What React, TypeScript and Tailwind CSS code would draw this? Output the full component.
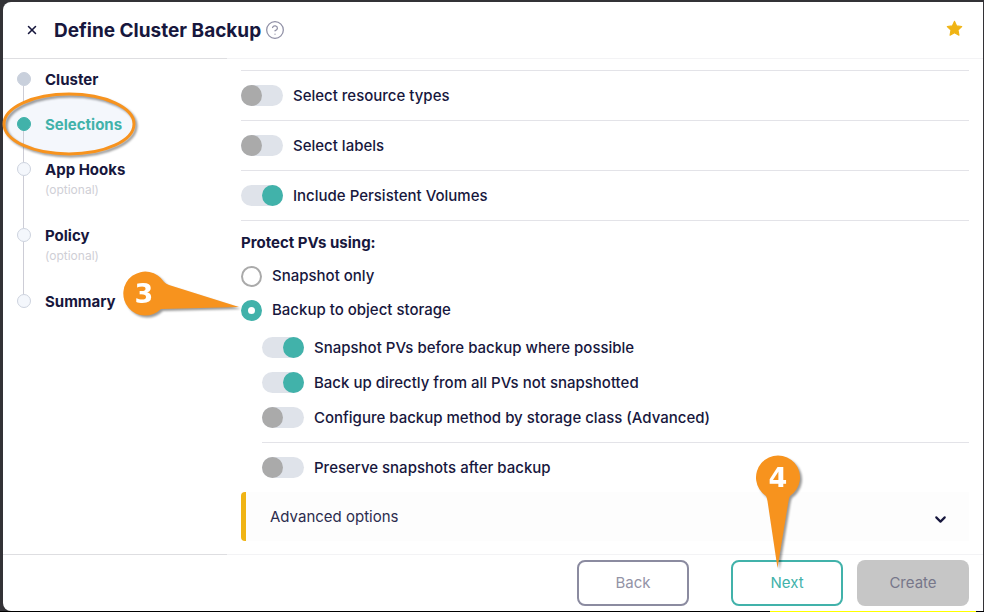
import { useState } from 'react'
import { ChevronDown, CircleHelp, X } from 'lucide-react'
import clsx from 'clsx'

type StepState = 'done' | 'current' | 'todo'

const steps: { label: string; state: StepState; optional?: boolean }[] = [
  { label: 'Cluster', state: 'done' },
  { label: 'Selections', state: 'current' },
  { label: 'App Hooks', state: 'todo', optional: true },
  { label: 'Policy', state: 'todo', optional: true },
  { label: 'Summary', state: 'todo' },
]

function Toggle({ id, label, defaultChecked }: { id: string; label: string; defaultChecked?: boolean }) {
  return (
    <div className="flex flex-1 items-center gap-2.5">
      <input
        id={id}
        type="checkbox"
        role="switch"
        defaultChecked={defaultChecked}
        className="flex h-[21px] w-[42px] shrink-0 appearance-none rounded-full bg-[#dfe3ea] before:size-[21px] before:rounded-full before:bg-[#aaaaaa] checked:before:ml-[21px] checked:before:bg-[#41b2aa]"
      />
      <label htmlFor={id} className="pt-px">{label}</label>
    </div>
  )
}

function StepItem({ label, state, optional, last }: { label: string; state: StepState; optional?: boolean; last: boolean }) {
  return (
    <li className={clsx('relative flex gap-3.5', optional ? 'h-[66px]' : 'h-[45px]')}>
      {state === 'current' && (
        <svg className="absolute -top-[26px] -left-[15px] h-[70px] w-[140px]" viewBox="0 0 140 70">
          <ellipse cx="67" cy="33" rx="65" ry="30" fill="#f4f7fc" />
        </svg>
      )}
      <div className="relative flex w-3.5 flex-col items-center">
        <span
          className={clsx(
            'size-3.5 shrink-0 rounded-full border',
            state === 'done' && 'border-[#c9d0dc] bg-[#c9d0dc]',
            state === 'current' && 'border-[#41b2aa] bg-[#41b2aa]',
            state === 'todo' && 'border-[#cdd3de] bg-[#f4f7fc]'
          )}
        />
        {!last && <span className="mr-px w-px flex-1 bg-[#cdcdd6]" />}
      </div>
      <div className="relative">
        <p className={clsx('text-[15px] leading-4 font-bold', state === 'current' && 'text-[#41b2aa]')}>{label}</p>
        {optional && <p className="mt-1.5 text-xs leading-3 text-[#cfcfd6]">(optional)</p>}
      </div>
      {state === 'current' && (
        <svg
          className="pointer-events-none absolute -top-[26px] -left-[15px] h-[70px] w-[140px] drop-shadow-[2px_2px_1px_rgba(0,0,0,0.4)]"
          viewBox="0 0 140 70"
          fill="none"
        >
          <ellipse cx="67" cy="33" rx="65" ry="30" stroke="#f7931e" strokeWidth="3" />
        </svg>
      )}
    </li>
  )
}

export default function App() {
  const [method, setMethod] = useState('backup')

  return (
    <div className="flex min-h-screen flex-col bg-[#333236] pt-0.5 font-['Inter','Liberation_Sans',sans-serif] text-[15px] text-[#17173d]">
      <div className="mr-px ml-[3px] flex flex-1 flex-col rounded-l-lg bg-white">
        <header className="flex h-14 items-center pr-5 pl-[22px]">
          <button aria-label="Close">
            <X size={14} strokeWidth={2.6} />
          </button>
          <h1 className="ml-[15px] pt-0.5 text-[19px] font-bold">Define Cluster Backup</h1>
          <button aria-label="Help" className="ml-1 text-[#8f8fa5]">
            <CircleHelp size={20} strokeWidth={1.5} />
          </button>
          <button aria-label="Favorite" className="mb-1 ml-auto">
            <svg width="17" height="17" viewBox="0 0 24 24" fill="#f0b414" stroke="#f0b414" strokeWidth="1.5" strokeLinejoin="round">
              <path d="M12 1.8l3.1 6.5 7.1 1-5.2 5 1.3 7.1L12 18l-6.3 3.4L7 14.3l-5.2-5 7.1-1z" />
            </svg>
          </button>
        </header>

        <div className="flex flex-1">
          <nav className="w-[224px] shrink-0 border-y border-[#dedee1] pt-[13px] pl-3.5">
            <ol>
              {steps.map((step, i) => (
                <StepItem key={step.label} {...step} last={i === steps.length - 1} />
              ))}
            </ol>
          </nav>

          <main className="flex-1 border-y border-[#f3f3f5] pt-[11px] pr-3.5 pb-[13px] pl-3.5 font-medium">
            <div className="border-t border-[#e3e3e8]">
              <div className="flex h-[50px] border-b border-[#e3e3e8]">
                <Toggle id="resource-types" label="Select resource types" />
              </div>
              <div className="flex h-[50px] border-b border-[#e3e3e8]">
                <Toggle id="labels" label="Select labels" />
              </div>
              <div className="flex h-[50px] border-b border-[#e3e3e8]">
                <Toggle id="volumes" label="Include Persistent Volumes" defaultChecked />
              </div>
            </div>

            <fieldset>
              <legend className="pt-[11px] pb-[5px] leading-[22px] font-bold">Protect PVs using:</legend>
              <div className="flex h-[34px] items-center gap-2.5">
                <input
                  id="snapshot-only"
                  type="radio"
                  name="method"
                  checked={method === 'snapshot'}
                  onChange={() => setMethod('snapshot')}
                  className="size-[21px] appearance-none rounded-full border-2 border-[#aaaaaa] checked:border-[7px] checked:border-[#41b2aa]"
                />
                <label htmlFor="snapshot-only">Snapshot only</label>
              </div>
              <div className="relative flex h-[34px] items-center gap-2.5">
                <input
                  id="backup"
                  type="radio"
                  name="method"
                  checked={method === 'backup'}
                  onChange={() => setMethod('backup')}
                  className="size-[21px] appearance-none rounded-full border-2 border-[#aaaaaa] checked:border-[7px] checked:border-[#41b2aa]"
                />
                <label htmlFor="backup">Backup to object storage</label>
                <svg
                  className="absolute -top-[25px] -left-[120px] h-[52px] w-[122px] drop-shadow-[2px_2px_1px_rgba(0,0,0,0.4)]"
                  viewBox="0 0 122 52"
                >
                  <path d="M43 14 Q45 16 48 17 L118 39 L40 41 A22 22 0 1 1 43 14Z" fill="#f7931e" />
                  <text x="23" y="35" textAnchor="middle" fill="#fff" className="font-['DejaVu_Sans',sans-serif] text-[27px] font-bold">
                    3
                  </text>
                </svg>
              </div>
            </fieldset>

            <div className="mt-[3px] ml-[21px]">
              <div className="border-b border-[#e3e3e8] pb-[7px]">
                <div className="flex h-[35px]">
                  <Toggle id="snapshot-first" label="Snapshot PVs before backup where possible" defaultChecked />
                </div>
                <div className="flex h-[35px]">
                  <Toggle id="direct" label="Back up directly from all PVs not snapshotted" defaultChecked />
                </div>
                <div className="flex h-[35px]">
                  <Toggle id="by-class" label="Configure backup method by storage class (Advanced)" />
                </div>
              </div>
              <div className="flex h-[49px]">
                <Toggle id="preserve" label="Preserve snapshots after backup" />
              </div>
            </div>

            <button className="flex h-[49px] w-full items-center justify-between rounded-l border-l-[5px] border-[#f0b414] bg-[#fdfdfd] pt-0.5 pr-5 pl-6 text-left font-normal text-[#2c2c4e]">
              Advanced options
              <ChevronDown size={17} strokeWidth={3} className="mt-1 text-[#17173d]" />
            </button>
          </main>
        </div>

        <footer className="flex justify-end py-[5px] pr-3.5">
          <button className="h-[46px] w-28 rounded-lg border-2 border-[#8b8ba0] text-[#9393a6]">Back</button>
          <button className="relative ml-[42px] h-[46px] w-28 rounded-lg border-2 border-[#41b2aa] text-[#41b2aa]">
            Next
            <svg
              className="absolute -top-[109px] left-5 h-[118px] w-[52px] drop-shadow-[2px_2px_1px_rgba(0,0,0,0.4)]"
              viewBox="0 0 52 118"
            >
              <path d="M13 43 A22 22 0 1 1 37 43 Q36 45 35.5 48 L24.5 115 L14.5 48 Q14 45 13 43Z" fill="#f7931e" />
              <text x="25" y="34" textAnchor="middle" fill="#fff" className="font-['DejaVu_Sans',sans-serif] text-[27px] font-bold">
                4
              </text>
            </svg>
          </button>
          <button disabled className="ml-3.5 h-[46px] w-28 rounded-lg bg-[#c6c6c6] text-[#77778a]">
            Create
          </button>
        </footer>
      </div>
      <div className="flex h-px justify-end bg-black pr-2">
        <div className="w-[206px] bg-[#ffff00]" />
      </div>
    </div>
  )
}
